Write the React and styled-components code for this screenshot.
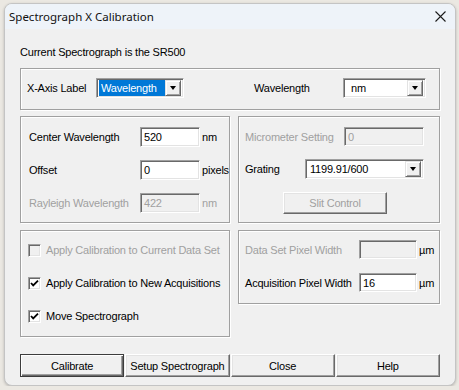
import styled, { createGlobalStyle, css } from 'styled-components'

const GlobalStyle = createGlobalStyle`
  body {
    margin: 0;
    background: #ebe8e2;
    font-family: "Liberation Sans", Arial, sans-serif;
  }
`

const sunken = css`
  box-sizing: border-box;
  border: 1px solid;
  border-color: #a0a0a0 #fff #fff #a0a0a0;
  box-shadow: inset 1px 1px 0 #696969, inset -1px -1px 0 #e3e3e3;
`

const Window = styled.div`
  width: 452px;
  height: 383px;
  box-sizing: border-box;
  margin: 3px 0 0 4px;
  border: 1px solid #c4c4c4;
  border-radius: 8px;
  overflow: hidden;
  background: #f0f0f0;
  box-shadow: 0 1px 3px rgba(0, 0, 0, 0.22);
  display: flex;
  flex-direction: column;
`

const TitleBar = styled.div`
  height: 25px;
  flex: none;
  display: flex;
  align-items: center;
  justify-content: space-between;
  padding: 0 9px 0 4px;
  background: #eef3f9;
`

const Title = styled.span`
  font-family: "Noto Sans", "Open Sans", sans-serif;
  font-size: 11.5px;
  color: #111;
`

const Body = styled.div`
  padding: 16px 15px 0 15px;
  display: flex;
  flex-direction: column;
  font-size: 11px;
  letter-spacing: -0.2px;
  color: #000;
`

const Caption = styled.div`
  height: 14px;
  line-height: 14px;
`

const Group = styled.div`
  box-sizing: border-box;
  border: 1px solid #a0a0a0;
  box-shadow: inset 1px 1px 0 #fff, 1px 1px 0 #fff;
  height: ${(p) => p.$h}px;
  padding: ${(p) => p.$pad};
  margin-top: ${(p) => p.$mt || 0}px;
  display: flex;
  flex-direction: column;
  gap: ${(p) => p.$gap || 0}px;
`

const AxisRow = styled.div`
  display: grid;
  grid-template-columns: 69px 88px 70px 89px 83px;
  align-items: center;
`

const Columns = styled.div`
  display: grid;
  grid-template-columns: 210px 202px;
  column-gap: 8px;
  align-items: start;
  margin-top: ${(p) => p.$mt}px;
`

const Row = styled.div`
  display: flex;
  align-items: center;
  height: ${(p) => p.$h || 20}px;
`

const Label = styled.span`
  width: ${(p) => (p.$w ? `${p.$w}px` : 'auto')};
  flex: none;
  white-space: nowrap;
  color: ${(p) => (p.$disabled ? '#a0a0a0' : '#000')};
`

const Unit = styled(Label)`
  margin-left: 2px;
`

const Field = styled.div`
  ${sunken};
  width: ${(p) => p.$w}px;
  height: ${(p) => p.$h || 20}px;
  flex: none;
  display: flex;
  align-items: center;
  padding-left: 3px;
  background: ${(p) => (p.$disabled ? '#f0f0f0' : '#fff')};
  color: ${(p) => (p.$disabled ? '#a0a0a0' : '#000')};
`

const Combo = styled.div`
  ${sunken};
  width: ${(p) => p.$w}px;
  height: 20px;
  flex: none;
  display: flex;
  align-items: center;
  padding: 2px;
  background: #fff;
`

const ComboValue = styled.span`
  flex: 1;
  height: 16px;
  line-height: 16px;
  padding-left: ${(p) => p.$pl || 2}px;
  background: ${(p) => (p.$selected ? '#0078d7' : 'transparent')};
  color: ${(p) => (p.$selected ? '#fff' : '#000')};
`

const ComboArrow = styled.span`
  width: 16px;
  height: 16px;
  box-sizing: border-box;
  flex: none;
  display: flex;
  align-items: center;
  justify-content: center;
  background: #f0f0f0;
  border: 1px solid;
  border-color: #e3e3e3 #696969 #696969 #e3e3e3;
  box-shadow: inset 1px 1px 0 #fff, inset -1px -1px 0 #a0a0a0;
  &::after {
    content: '';
    border-left: 3.5px solid transparent;
    border-right: 3.5px solid transparent;
    border-top: 4px solid #000;
  }
`

const Button = styled.button`
  box-sizing: border-box;
  height: ${(p) => p.$h || 23}px;
  width: ${(p) => (p.$w ? `${p.$w}px` : '100%')};
  margin: ${(p) => p.$m || 0};
  padding: 0;
  font: inherit;
  letter-spacing: inherit;
  background: #f0f0f0;
  color: ${(p) => (p.disabled ? '#a0a0a0' : '#000')};
  border: 1px solid;
  border-color: #fff #696969 #696969 #fff;
  box-shadow: inset -1px -1px 0 #a0a0a0, inset 1px 1px 0 #e3e3e3;
  ${(p) =>
    p.$default &&
    css`
      border-color: #3c3c3c;
      box-shadow: inset 1px 1px 0 #fff, inset -1px -1px 0 #696969, inset -2px -2px 0 #a0a0a0;
    `}
`

const ButtonBar = styled.div`
  display: grid;
  grid-template-columns: repeat(4, 1fr);
  column-gap: 1px;
  margin-top: 17px;
`

const CheckRow = styled.label`
  display: flex;
  align-items: center;
  gap: 5px;
  height: 20px;
  color: ${(p) => (p.$disabled ? '#a0a0a0' : '#000')};
`

const Box = styled.span`
  ${sunken};
  width: 13px;
  height: 13px;
  flex: none;
  display: flex;
  align-items: center;
  justify-content: center;
  background: ${(p) => (p.$disabled ? '#f0f0f0' : '#fff')};
`

const CloseIcon = () => (
  <svg width="11" height="11" viewBox="0 0 11 11">
    <path d="M0.5 0.5 L10.5 10.5 M10.5 0.5 L0.5 10.5" stroke="#1b1b1b" strokeWidth="1.1" />
  </svg>
)

const Check = ({ checked, disabled, children }) => (
  <CheckRow $disabled={disabled}>
    <Box $disabled={disabled}>
      {checked && (
        <svg width="9" height="9" viewBox="0 0 9 9">
          <polyline points="1,4 3.2,6.4 8,1.6" fill="none" stroke="#000" strokeWidth="1.8" />
        </svg>
      )}
    </Box>
    {children}
  </CheckRow>
)

export default function App() {
  return (
    <>
      <GlobalStyle />
      <Window>
        <TitleBar>
          <Title>Spectrograph X Calibration</Title>
          <CloseIcon />
        </TitleBar>
        <Body>
          <Caption>Current Spectrograph is the SR500</Caption>

          <Group $h={42} $pad="9px 0 0 6px" $mt={9}>
            <AxisRow>
              <Label>X-Axis Label</Label>
              <Combo $w={88}>
                <ComboValue $selected>Wavelength</ComboValue>
                <ComboArrow />
              </Combo>
              <span />
              <Label>Wavelength</Label>
              <Combo $w={83}>
                <ComboValue $pl={5}>nm</ComboValue>
                <ComboArrow />
              </Combo>
            </AxisRow>
          </Group>

          <Columns $mt={6}>
            <Group $h={107} $pad="10px 0 0 8px" $gap={13}>
              <Row>
                <Label $w={111}>Center Wavelength</Label>
                <Field $w={60}>520</Field>
                <Unit>nm</Unit>
              </Row>
              <Row>
                <Label $w={111}>Offset</Label>
                <Field $w={60}>0</Field>
                <Unit>pixels</Unit>
              </Row>
              <Row>
                <Label $w={111} $disabled>Rayleigh Wavelength</Label>
                <Field $w={60} $disabled>422</Field>
                <Unit $disabled>nm</Unit>
              </Row>
            </Group>

            <Group $h={107} $pad="10px 0 0 6px" $gap={13}>
              <Row $h={19}>
                <Label $w={99} $disabled>Micrometer Setting</Label>
                <Field $w={80} $h={19} $disabled>0</Field>
              </Row>
              <Row>
                <Label $w={60}>Grating</Label>
                <Combo $w={119}>
                  <ComboValue>1199.91/600</ComboValue>
                  <ComboArrow />
                </Combo>
              </Row>
              <Row $h={22}>
                <Button $w={104} $h={22} $m="0 0 0 38px" disabled>
                  Slit Control
                </Button>
              </Row>
            </Group>
          </Columns>

          <Columns $mt={7}>
            <Group $h={107} $pad="9px 0 0 7px" $gap={13}>
              <Check disabled>Apply Calibration to Current Data Set</Check>
              <Check checked>Apply Calibration to New Acquisitions</Check>
              <Check checked>Move Spectrograph</Check>
            </Group>

            <Group $h={74} $pad="9px 0 0 6px" $gap={14}>
              <Row $h={19}>
                <Label $w={114} $disabled>Data Set Pixel Width</Label>
                <Field $w={58} $h={19} $disabled />
                <Unit>µm</Unit>
              </Row>
              <Row $h={19}>
                <Label $w={114}>Acquisition Pixel Width</Label>
                <Field $w={58} $h={19}>16</Field>
                <Unit>µm</Unit>
              </Row>
            </Group>
          </Columns>

          <ButtonBar>
            <Button $default>Calibrate</Button>
            <Button>Setup Spectrograph</Button>
            <Button>Close</Button>
            <Button>Help</Button>
          </ButtonBar>
        </Body>
      </Window>
    </>
  )
}
